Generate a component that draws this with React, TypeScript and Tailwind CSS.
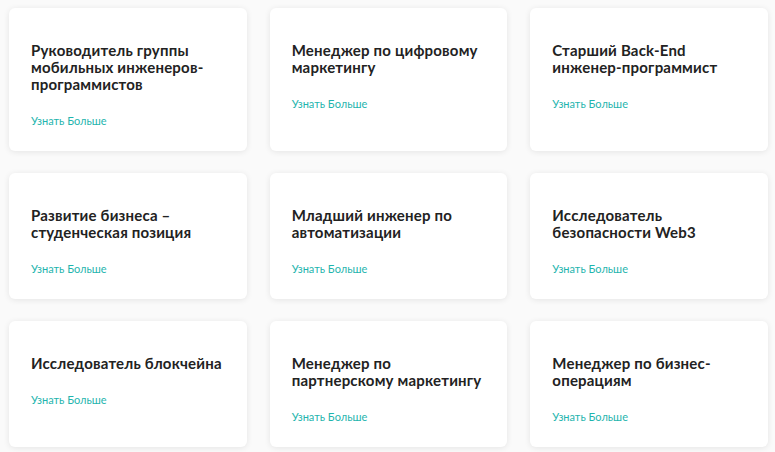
import React from 'react'

interface Vacancy {
  title: string
}

const vacancies: Vacancy[] = [
  { title: 'Руководитель группы мобильных инженеров-программистов' },
  { title: 'Менеджер по цифровому маркетингу' },
  { title: 'Старший Back-End инженер-программист' },
  { title: 'Развитие бизнеса – студенческая позиция' },
  { title: 'Младший инженер по автоматизации' },
  { title: 'Исследователь безопасности Web3' },
  { title: 'Исследователь блокчейна' },
  { title: 'Менеджер по партнерскому маркетингу' },
  { title: 'Менеджер по бизнес-операциям' },
]

function VacancyCard({ title }: Vacancy) {
  return (
    <div className="bg-white rounded-md shadow-[0_1px_6px_rgba(0,0,0,0.09)] pl-[22px] pr-[20px] pt-[34px] pb-[22px]">
      <h3 className="text-[15px] leading-[17px] font-bold text-[#222] tracking-[0.2px] max-w-[200px]">
        {title}
      </h3>
      <a href="#" className="block mt-[20px] text-[11px] leading-[16px] text-[#1fb5ae]">
        Узнать Больше
      </a>
    </div>
  )
}

export default function App() {
  return (
    <div className="w-[775px] min-h-[452px] bg-[#fafafa] pl-[9px] pr-[7px] pt-[8px] font-['Lato','Noto_Sans',sans-serif]">
      <div className="grid grid-cols-3 gap-x-[23px] gap-y-[22px]">
        {vacancies.map((v, i) => (
          <VacancyCard key={i} title={v.title} />
        ))}
      </div>
    </div>
  )
}
